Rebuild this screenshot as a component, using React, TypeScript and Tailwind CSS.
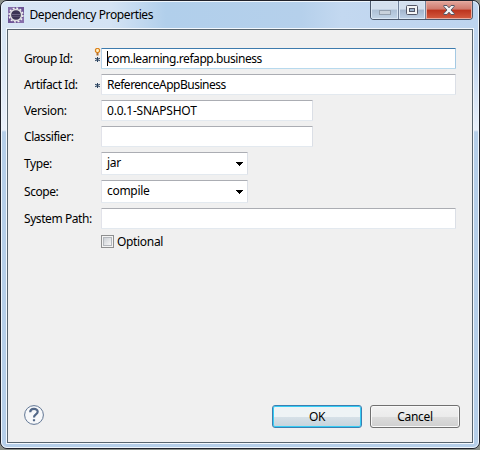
import React from "react";

type RowProps = {
  label: string;
  labelClass?: string;
  className?: string;
  required?: boolean;
  hint?: boolean;
  children: React.ReactNode;
};

function Row({ label, labelClass = "tracking-[-0.43px]", className = "h-[21px] mb-[5px]", required, hint, children }: RowProps) {
  return (
    <div className={`flex items-center ${className}`}>
      <div className={`w-[70px] shrink-0 whitespace-nowrap leading-4 ${labelClass}`}>{label}</div>
      <div className="relative h-full w-[7px] shrink-0">
        {hint && (
          <svg className="absolute left-0 top-0 h-[8px] w-[7px]" viewBox="0 0 7 8">
            <path d="M1.500 1.500 2.500.5h2l1 1v2L4.500 4.500h-2L1.500 3.500z" fill="#fff0c4" stroke="#dc8420" strokeWidth="1.200" />
            <path d="M2.500 5h2v2.500h-2z" fill="#b06e2c" />
          </svg>
        )}
        {required && (
          <svg className="absolute left-0 top-[8px] h-[7px] w-[7px]" viewBox="0 0 7 7">
            <path d="M3.500 1v5M1.200 2.200l4.600 2.600M5.800 2.200 1.200 4.800" stroke="#29425f" strokeWidth="1.050" />
          </svg>
        )}
      </div>
      {children}
    </div>
  );
}

function Field({ value = "", width, focused, textClass = "" }: { value?: string; width: string; focused?: boolean; textClass?: string }) {
  const border = focused
    ? "border-t-[#3d7bad] border-r-[#a4c9e3] border-b-[#b7d9ed] border-l-[#b5cfe7]"
    : "border-t-[#abadb3] border-r-[#dbdfe6] border-b-[#e3e9ef] border-l-[#e2e3ea]";
  return (
    <div className={`flex h-[21px] shrink-0 items-center rounded-[1px] border bg-white pl-[5px] ${border} ${width}`}>
      {focused && <span className="-mr-px h-[15px] w-px bg-black" />}
      <span className={`whitespace-nowrap leading-4 ${textClass}`}>{value}</span>
    </div>
  );
}

function Combo({ value, textClass = "" }: { value: string; textClass?: string }) {
  return (
    <div className="flex h-[23px] w-[147px] items-center justify-between rounded-[1px] border border-t-[#abadb3] border-r-[#dbdfe6] border-b-[#e3e9ef] border-l-[#e2e3ea] bg-white pr-[4px] pl-[5px]">
      <span className={`-mt-px leading-4 ${textClass}`}>{value}</span>
      <svg className="mt-[1px] h-[4px] w-[7px]" viewBox="0 0 7 4" shapeRendering="crispEdges">
        <path d="M0 0h7v1H6v1H5v1H4v1H3V3H2V2H1V1H0z" fill="#000" />
      </svg>
    </div>
  );
}

function AppIcon() {
  return (
    <svg className="h-4 w-4" viewBox="0 0 16 16">
      <rect width="16" height="16" fill="#6e5597" />
      <path d="M0 0h6L0 7zM16 16h-6l6-6z" fill="#8870ac" />
      <circle cx="8" cy="8" r="6.900" fill="none" stroke="#f2f2f2" strokeWidth="1.500" strokeDasharray="2 1.613" />
      <circle cx="8" cy="8" r="5.600" fill="#3b3454" stroke="#e0e0e2" strokeWidth="1.500" />
      <path d="M3.800 7.500h8.400" stroke="#6e6685" />
      <path d="M4 9.500h8" stroke="#544c6c" />
    </svg>
  );
}

function WindowControls() {
  return (
    <div className="flex h-[19px] w-[103px] overflow-hidden rounded-b-[4px] border border-t-0 border-[#4b586c]">
      <div className="flex w-[28px] justify-center border-r border-[#71819a] bg-linear-to-b from-[#d4e0ee] from-45% via-[#adc0d6] via-50% to-[#c3d5e8] shadow-[inset_0_0_0_1px_#dce8f5]">
        <svg className="mt-[8px] h-[6px] w-[12px]" viewBox="0 0 12 6">
          <rect x=".5" y="1.500" width="11" height="4" fill="#c9d2dc" stroke="#939fae" />
        </svg>
      </div>
      <div className="flex w-[27px] justify-center border-r border-[#71819a] bg-linear-to-b from-[#d4e0ee] from-45% via-[#a3b5cd] via-50% to-[#bfd2e8] shadow-[inset_0_0_0_1px_#dce8f5]">
        <svg className="mt-[4px] h-[10px] w-[12px]" viewBox="0 0 12 10">
          <rect x=".5" y=".5" width="11" height="9" rx="1" fill="#f4f5f6" stroke="#535666" />
          <rect x="3.500" y="3.500" width="5" height="3" fill="#9eb4ce" stroke="#535666" />
        </svg>
      </div>
      <div className="flex flex-1 justify-center bg-linear-to-b from-[#e6aaa0] from-5% via-[#cf7263] via-45% to-[#d76b4c] shadow-[inset_0_0_0_1px_#e9aca0]">
        <div className="m-px flex flex-1 justify-center bg-[linear-gradient(180deg,#e0a298_0,#d0796c_45%,#bc331d_50%,#d2583d_100%)]">
          <svg className="mt-[3px] h-[10px] w-[12px]" viewBox="0 0 12 10">
            <path d="M.8.5H4L6 2.800 8 .5h3.200v1L8 5l3.200 3.500v1H8L6 7.200 4 9.500H.8v-1L4 5 .8 1.500z" fill="#f3f3f5" stroke="#555765" />
          </svg>
        </div>
      </div>
    </div>
  );
}

export default function App() {
  return (
    <div className="h-[450px] w-[480px] overflow-hidden bg-[#8b9089] font-['Noto_Sans','Open_Sans',sans-serif] text-[12px] text-black">
      <div className="h-[449px] w-[480px] overflow-hidden rounded-[7px] border border-[#20222b] bg-[linear-gradient(90deg,#d9e6f5_0,#d4e3f4_110px,#b1cfeb_165px,#b5d0eb_300px,#c3d8f0_340px,#bdd4ef_100%)]">
        <div className="flex h-[447px] flex-col rounded-[6px] border border-[#eff6fc] bg-[linear-gradient(180deg,transparent_50px,#e9f0fa_128px,#b6cfe9_130px)] px-[4px] pb-[3px]">
          <header className="flex h-[26px] shrink-0 items-start pl-[2px]">
            <div className="mt-[5px]"><AppIcon /></div>
            <h1 className="mt-[5px] ml-[5.5px] grow whitespace-nowrap leading-4 font-normal tracking-[-0.4px]">Dependency Properties</h1>
            <div className="-mt-px mr-[1px]"><WindowControls /></div>
          </header>
          <main className="flex w-[468px] grow flex-col border border-[#f3f8fd]">
            <div className="flex w-[466px] grow flex-col border border-[#58656f] bg-[#f0f0f0]">
              <form className="pt-[18px] pl-[16px]">
                <Row label="Group Id:" required hint labelClass="tracking-[-0.55px]">
                  <Field value="com.learning.refapp.business" width="w-[355px]" focused textClass="tracking-[-0.44px]" />
                </Row>
                <Row label="Artifact Id:" required>
                  <Field value="ReferenceAppBusiness" width="w-[355px]" textClass="tracking-[-0.5px]" />
                </Row>
                <Row label="Version:" labelClass="tracking-[-0.36px]">
                  <Field value="0.0.1-SNAPSHOT" width="w-[212px]" textClass="tracking-[-0.22px]" />
                </Row>
                <Row label="Classifier:">
                  <Field width="w-[212px]" />
                </Row>
                <Row label="Type:" className="mb-[5px] h-[23px]">
                  <Combo value="jar" textClass="tracking-[-0.3px]" />
                </Row>
                <Row label="Scope:" className="mb-[5px] h-[23px]">
                  <Combo value="compile" textClass="tracking-[-0.3px]" />
                </Row>
                <Row label="System Path:" className="mb-[6px] h-[21px]">
                  <Field width="w-[355px]" />
                </Row>
                <div className="flex h-[13px] items-center pl-[77px]">
                  <span className="h-[13px] w-[13px] border border-[#8e8f8f] bg-[#f4f4f4] p-px">
                    <span className="block h-[9px] w-[9px] border border-[#b4b8bd] bg-linear-to-br from-[#ccd0d5] to-[#f6f6f6]" />
                  </span>
                  <span className="ml-[3px] leading-4 tracking-[-0.33px]">Optional</span>
                </div>
              </form>
              <footer className="mt-auto mb-[14px] flex items-start pr-[12px] pl-[16px]">
                <svg className="h-[20px] w-[20px]" viewBox="0 0 20 20">
                  <circle cx="10" cy="10" r="9.400" fill="#f7f8fa" stroke="#607593" />
                  <path d="M6.200 7.200C6.200 2.900 13.700 3 13.700 6.700c0 2.800-3.700 2.600-3.700 5.700M10 14.200v2" fill="none" stroke="#536888" strokeWidth="2.200" />
                </svg>
                <div className="ml-auto flex gap-[8px]">
                  <div className="flex h-[23px] w-[90px] items-center justify-center rounded-[3px] border border-[#3c7fb1] bg-linear-to-b from-[#eef3f5] from-50% via-[#d7e1e8] via-50% to-[#c5d3dc] tracking-[-0.3px] shadow-[inset_0_0_0_1px_#35cdf5]">OK</div>
                  <div className="flex h-[23px] w-[90px] items-center justify-center rounded-[3px] border border-[#707070] bg-[linear-gradient(180deg,#f2f2f2_0,#ebebeb_50%,#dddddd_50%,#cfcfcf_100%)] tracking-[-0.3px] shadow-[inset_0_0_0_1px_#f9f9f9]">Cancel</div>
                </div>
              </footer>
            </div>
          </main>
        </div>
      </div>
    </div>
  );
}
